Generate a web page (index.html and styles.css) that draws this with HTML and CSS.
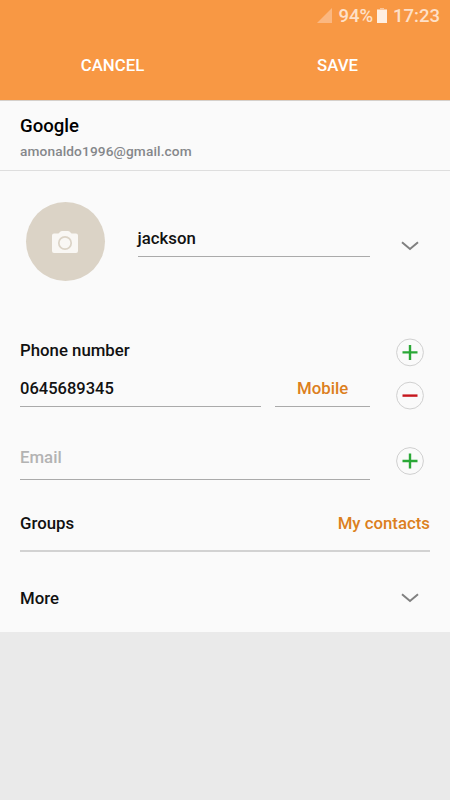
FILE: index.html
```html
<!DOCTYPE html>
<html lang="en">
  <head>
    <meta charset="UTF-8" />
    <meta name="viewport" content="width=device-width, initial-scale=1.0" />
    <title>Edit contact</title>
    <link rel="stylesheet" href="styles.css">
  </head>

  <body>
    <header>
      <div class="status">
        <svg class="signal" width="15" height="15" viewBox="0 0 15 15">
          <path d="M15 0V15H0Z" />
        </svg>
        <span class="percent">94%</span>
        <svg class="battery" width="10" height="15" viewBox="0 0 10 15">
          <path class="cap" d="M3 0H7V1H10V2H0V1H3Z" />
          <path d="M0 2H10V15H0Z" />
        </svg>
        <span class="time">17:23</span>
      </div>
      <nav>
        <a href="#">CANCEL</a>
        <a href="#">SAVE</a>
      </nav>
    </header>

    <main>
      <section class="account">
        <h1>Google</h1>
        <p>amonaldo1996@gmail.com</p>
      </section>

      <section class="name-row">
        <div class="avatar">
          <svg width="26" height="22" viewBox="0 0 26 22">
            <path class="camera" d="M2 2.5H6.5L8.5 0.6Q9 0 10 0H16Q17 0 17.5 0.6L19.5 2.5H24Q26 2.5 26 4.5V20Q26 22 24 22H2Q0 22 0 20V4.5Q0 2.5 2 2.5Z" />
            <circle class="lens" cx="13" cy="12" r="6.2" />
          </svg>
        </div>
        <div class="field name">jackson</div>
        <svg class="chevron" width="18" height="10" viewBox="0 0 18 10">
          <path d="M1 1.2L9 8L17 1.2" />
        </svg>
      </section>

      <section class="row phone-title">
        <h2>Phone number</h2>
        <svg class="round add" width="28" height="28" viewBox="0 0 28 28">
          <circle cx="14" cy="14.4" r="13.4" />
          <path d="M6.5 14.4H21.5M14 6.9V21.9" />
        </svg>
      </section>

      <section class="row phone">
        <div class="field number">0645689345</div>
        <div class="field type">Mobile</div>
        <svg class="round remove" width="28" height="29" viewBox="0 0 28 29">
          <circle cx="14" cy="14.6" r="13.4" />
          <path d="M6.5 14.6H21.5" />
        </svg>
      </section>

      <section class="row email">
        <div class="field">Email</div>
        <svg class="round add" width="28" height="28" viewBox="0 0 28 28">
          <circle cx="14" cy="14" r="13.4" />
          <path d="M6.5 14H21.5M14 6.5V21.5" />
        </svg>
      </section>

      <section class="groups">
        <h2>Groups</h2>
        <a href="#">My contacts</a>
      </section>

      <section class="more">
        <h2>More</h2>
        <svg class="chevron" width="18" height="10" viewBox="0 0 18 10">
          <path d="M1 1.2L9 8L17 1.2" />
        </svg>
      </section>
    </main>
  </body>
</html>
```
FILE: styles.css
```css
* {
  margin: 0;
  padding: 0;
  box-sizing: border-box;
}

body {
  font-family: Roboto, sans-serif;
  font-size: 16.8px;
  font-weight: 500;
  line-height: 20px;
  color: #111;
  background: #eaeaea;
}

svg {
  display: block;
  flex: none;
  overflow: visible;
}

a {
  text-decoration: none;
}

h2 {
  font-size: 16.8px;
  font-weight: 500;
}

header {
  height: 101px;
  background: #f89844;
  border-bottom: 1px solid #d5d0cb;
}

.status {
  display: flex;
  justify-content: flex-end;
  align-items: center;
  height: 31px;
  padding-right: 10px;
  font-size: 18.5px;
  color: #fee0c8;
}

.signal {
  margin-right: 6px;
  fill: #fbb780;
}

.battery {
  margin: 0 6px 0 4px;
  fill: #ffefe2;
}

.battery .cap {
  fill: #fbc598;
}

nav {
  display: flex;
  height: 69px;
}

nav a {
  width: 50%;
  padding-top: 24px;
  text-align: center;
  color: white;
}

main {
  background: #fafafa;
  height: 531px;
}

.account {
  height: 70px;
  padding: 14px 20px 0;
  border-bottom: 1px solid #dedede;
}

.account h1 {
  font-size: 18.6px;
  font-weight: 500;
  line-height: 22px;
  color: #000;
}

.account p {
  margin-top: 4px;
  font-size: 13.7px;
  letter-spacing: 0.12px;
  color: #85878a;
}

.name-row {
  display: flex;
  align-items: center;
  height: 142px;
  padding: 0 31px 0 25.5px;
}

.avatar {
  display: flex;
  align-items: center;
  justify-content: center;
  width: 79px;
  height: 79px;
  margin-top: -1px;
  border-radius: 50%;
  background: #dbd3c6;
}

.camera {
  fill: #f9f7f4;
}

.lens {
  fill: none;
  stroke: #dbd3c6;
  stroke-width: 1.7;
}

.field {
  border-bottom: 1px solid #aaa;
}

.name {
  width: 232.5px;
  height: 29px;
  margin: 1px 0 0 33px;
}

.chevron {
  margin-left: auto;
  fill: none;
  stroke: #808080;
  stroke-width: 2;
}

.name-row .chevron {
  margin-top: 7px;
}

.row {
  display: flex;
  justify-content: space-between;
  padding: 0 26px 0 20px;
}

.round circle {
  fill: none;
  stroke: #d0d0d0;
}

.round path {
  fill: none;
  stroke-width: 2.4;
}

.add path {
  stroke: #2aa836;
}

.remove path {
  stroke: #c6161d;
}

.phone-title {
  height: 65px;
  padding-top: 25px;
}

.phone-title h2 {
  padding-top: 2px;
}

.phone {
  height: 65px;
}

.number {
  width: 242px;
  height: 29px;
  font-size: 16.5px;
  line-height: 22px;
}

.type {
  width: 95px;
  height: 29px;
  margin: 0 26px 0 14px;
  text-align: center;
  color: #dc7f20;
}

.phone .round {
  margin-top: 3px;
}

.email {
  height: 70px;
  padding-top: 4px;
}

.email .field {
  width: 350px;
  height: 33px;
  color: #b3b3b3;
}

.groups {
  display: flex;
  justify-content: space-between;
  height: 39px;
  margin: 0 20px;
  border-bottom: 2px solid #d2d2d2;
}

.groups a {
  color: #dc7f20;
}

.more {
  display: flex;
  align-items: center;
  height: 80px;
  padding: 12px 31px 0 20px;
}
```
